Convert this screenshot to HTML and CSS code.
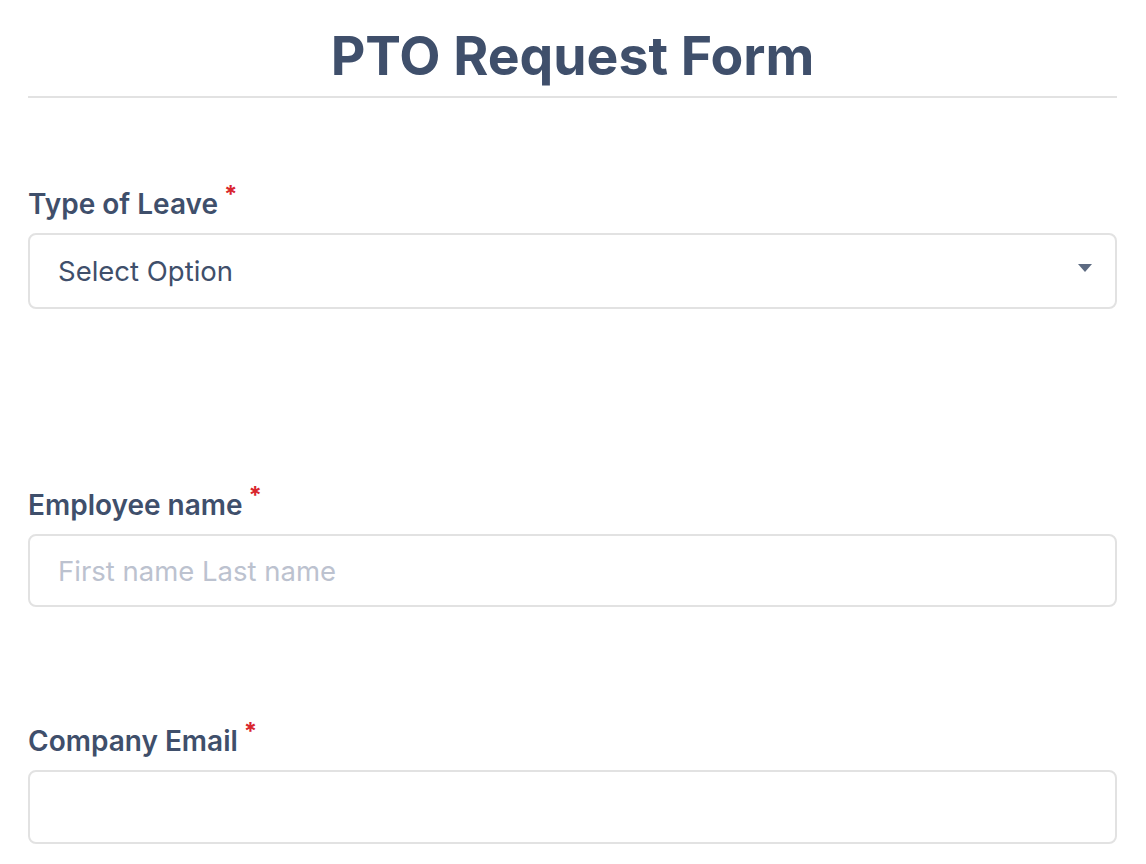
FILE: index.html
```html
<!DOCTYPE html>
<html>
<head>
<meta charset="utf-8">
<link rel="stylesheet" href="styles.css">
</head>
<body>
<div class="page">
  <h1 class="title">PTO Request Form</h1>
  <form class="form">
    <div class="field field-select">
      <label class="label">Type of Leave<span class="req">*</span></label>
      <div class="select">
        <span class="select-text">Select Option</span>
        <svg class="caret" width="14" height="8" viewBox="0 0 14 8"><path d="M0 0H14L7 8Z" fill="#5d6b82"/></svg>
      </div>
    </div>
    <div class="field field-name">
      <label class="label">Employee name<span class="req">*</span></label>
      <input class="input" type="text" placeholder="First name Last name">
    </div>
    <div class="field field-email">
      <label class="label">Company Email<span class="req">*</span></label>
      <input class="input input-tall" type="text">
    </div>
  </form>
</div>
</body>
</html>
```
FILE: styles.css
```css
* { box-sizing: border-box; }
html, body { margin: 0; padding: 0; background: #fff; }
body { font-family: Inter, "Noto Sans", sans-serif; color: #3f4f6b; }
.page { padding: 0 29px 0 28px; }
.title {
  margin: 0;
  padding-top: 26px;
  padding-bottom: 10px;
  font-size: 53.5px;
  line-height: 60px;
  font-weight: 700;
  text-align: center;
  color: #3f4f6b;
  border-bottom: 2px solid #e2e2e2;
}
.form { display: flex; flex-direction: column; }
.field { display: flex; flex-direction: column; }
.field-select { margin-top: 90px; }
.field-name { margin-top: 180px; }
.field-email { margin-top: 118px; }
.label {
  font-size: 28px;
  font-weight: 600;
  line-height: 32px;
  color: #3f4f6b;
  margin-bottom: 11px;
}
.req {
  color: #d9262e;
  font-size: 24px;
  font-weight: 700;
  position: relative;
  top: -11px;
  margin-left: 6px;
}
.select, .input {
  height: 76px;
  border: 2px solid #e2e2e2;
  border-radius: 8px;
  background: #fff;
  font-family: Inter, "Noto Sans", sans-serif;
  font-size: 27.5px;
  color: #3f4f6b;
  padding: 0 28px;
}
.select {
  display: flex;
  align-items: center;
  justify-content: space-between;
}
.input { width: 100%; height: 73px; outline: none; }
.input-tall { height: 74px; }
.input::placeholder { color: #bcc2cf; }
.caret { margin-right: -5px; margin-top: -6px; }
```
